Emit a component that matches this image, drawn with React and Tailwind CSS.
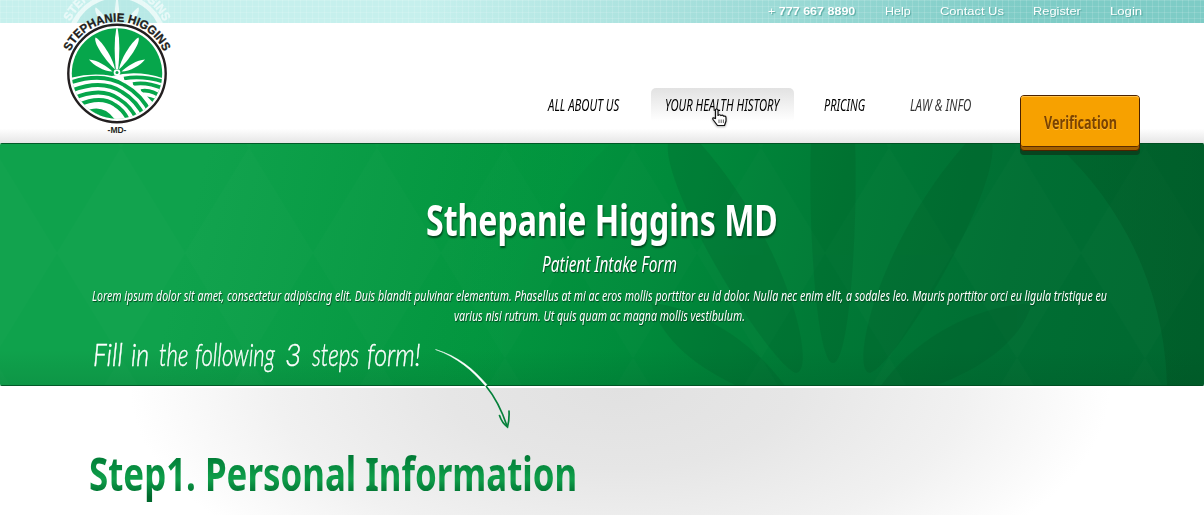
import React, { useLayoutEffect, useRef, useState } from "react";

// A single line of text condensed horizontally to fill the width of its box.
function Fit({ children, className = "", textClassName = "" }) {
  const box = useRef(null);
  const text = useRef(null);
  const [scale, setScale] = useState(1);
  useLayoutEffect(() => {
    setScale(box.current.clientWidth / text.current.offsetWidth);
  }, [children]);
  return (
    <span ref={box} className={`block shrink-0 whitespace-nowrap ${className}`}>
      <span
        ref={text}
        className={`inline-block origin-left ${textClassName}`}
        style={{ transform: `scaleX(${scale})` }}
      >
        {children}
      </span>
    </span>
  );
}

function Logo({ id, ink, paper, field }) {
  return (
    <svg width="120" height="140" viewBox="57 0 120 140" className="block overflow-visible">
      <defs>
        <path id={`${id}-arc`} d="M 70.2 51.4 A 51.7 51.7 0 0 1 163.8 51.4" />
        <clipPath id={`${id}-disc`}>
          <circle cx="117" cy="73.5" r="45.2" />
        </clipPath>
        <clipPath id={`${id}-left`}>
          <path d="M70 79 Q103 71 125 80 Q147 92 158 110 L140 128 H65 Z" />
        </clipPath>
      </defs>
      <circle cx="117" cy="73.5" r="48.7" fill={paper} stroke={ink} strokeWidth="2.4" />
      <g clipPath={`url(#${id}-disc)`}>
        <rect x="70" y="26" width="94" height="96" fill={field} />
        <g fill={paper}>
          <path d="M117 25 Q121 42 118.200 69 L115.800 69 Q113 42 117 25Z" />
          <path d="M95.500 37.500 C100 39 113 57 115 69.500 C106 61 93 43 95.500 37.500Z" />
          <path d="M138.500 37.500 C134 39 121 57 119 69.500 C128 61 141 43 138.500 37.500Z" />
          <path d="M89 59.500 C97 60 107 66 112.500 71.500 C104 71.500 93 65 89 59.500Z" />
          <path d="M145 59.500 C137 60 127 66 121.500 71.500 C130 71.500 141 65 145 59.500Z" />
          <path d="M66 79 Q90 72 112 76 Q140 69 168 80 V126 H66Z" />
        </g>
        <g fill="none" stroke={field} strokeWidth="3.800">
          <path d="M124 78.500 Q144 75 168 83" />
          <path d="M133 84 Q148 81 168 90.500" />
          <path d="M141 91 Q152 89 164 99" />
          <path d="M147 98.500 Q154 99 160 105" />
        </g>
        <g clipPath={`url(#${id}-left)`}>
          <rect x="66" y="70" width="95" height="60" fill={paper} />
          <g fill="none" stroke={field} strokeWidth="3.800">
            <path d="M66 84 Q101 71 124 85 Q142 95 151 114" />
            <path d="M68 92 Q101 78 122 92 Q137 101 145 118" />
            <path d="M72 99 Q101 86 119 99 Q132 107 138 122" />
            <path d="M78 105 Q101 95 115 105 Q125 111 130 124" />
          </g>
          <path d="M84 112 Q103 102 116 121 L104 120Z" fill={field} />
        </g>
      </g>
      <circle cx="117" cy="72.500" r="3.300" fill={paper} />
      <circle cx="117" cy="72.500" r="1.500" fill={field} />
      <text
        fill={ink}
        stroke={ink}
        strokeWidth=".3"
        className="font-['Liberation_Sans',sans-serif] text-[12px] font-bold"
      >
        <textPath href={`#${id}-arc`} textLength="117" lengthAdjust="spacingAndGlyphs">
          STEPHANIE HIGGINS
        </textPath>
      </text>
      <text
        x="117"
        y="133"
        textAnchor="middle"
        fill={ink}
        className="font-['Liberation_Sans',sans-serif] text-[8.5px] font-bold"
      >
        -MD-
      </text>
    </svg>
  );
}

function TopBar() {
  return (
    <div className="relative h-[23px] overflow-hidden bg-linear-to-r from-[#c6f0ed] from-35% via-[#9fdcd8] via-62% to-[#7eccc6] to-85%">
      <div className="absolute inset-0 bg-[linear-gradient(#ffffff20_1px,transparent_1px),linear-gradient(90deg,#ffffff20_1px,transparent_1px)] bg-size-[6px_6px]" />
      <div className="absolute -top-[30px] left-[57px] opacity-60">
        <Logo id="ghost" ink="#ffffff" paper="#ffffff" field="#b0e6e2" />
      </div>
      <div className="relative flex h-[22px] items-center pl-[768px] font-['Liberation_Sans',sans-serif] text-[11.5px] leading-[22px] text-white [text-shadow:1px_1px_1px_#57a9a2]">
        <Fit className="mr-[29px] w-[87px]">
          + <b>777 667 8890</b>
        </Fit>
        <Fit className="mr-[29px] ml-px w-[26px]">Help</Fit>
        <Fit className="mr-[29px] w-[64px]">Contact Us</Fit>
        <Fit className="mr-[29px] w-[48px]">Register</Fit>
        <Fit className="w-[32px]">Login</Fit>
      </div>
    </div>
  );
}

function Hand() {
  return (
    <svg width="18" height="20" viewBox="0 0 18 20" className="absolute top-[20px] left-[60px] drop-shadow-[0_1px_1px_#00000055]">
      <path
        d="M4.500 1.500 Q6 .3 7 2 V7.500 Q8.500 6 10 7.600 Q11.500 6.600 12.600 8.200 Q15 7.500 15 10 V13 L13.500 17.500 H6.500 L2 11.500 Q1 8.700 4.500 10.500Z"
        fill="#fff"
        stroke="#111"
        strokeWidth="1.200"
        strokeLinejoin="round"
      />
      <path d="M8 11.500V15M10.200 11.500V15M12.400 11.500V15" stroke="#333" strokeWidth=".8" />
    </svg>
  );
}

function Nav() {
  return (
    <nav className="flex h-[120px] items-start bg-linear-to-b from-white from-88% to-[#e6e6e6] pt-[65px] pl-[548px] font-['Noto_Sans',sans-serif] text-[15.5px] leading-[34px] text-black italic [font-stretch:75%]">
      <Fit className="w-[71px]">ALL ABOUT US</Fit>
      <div className="relative ml-[32px] h-[33px] w-[143px] rounded-t-[5px] bg-linear-to-b from-[#e2e2e2] to-white px-[14px]">
        <Fit className="w-[114px]">YOUR HEALTH HISTORY</Fit>
        <Hand />
      </div>
      <Fit className="ml-[30px] w-[41px]">PRICING</Fit>
      <Fit className="ml-[45px] w-[61px] text-[#333]">LAW &amp; INFO</Fit>
      <button className="relative z-10 mt-[7px] ml-[49px] flex h-[56px] w-[120px] items-start rounded-[4px] border border-[#4b2200] bg-[#a35f00] not-italic shadow-[0_4px_0_#07441f]">
        <span className="flex h-[51px] w-full justify-center rounded-[3px] border-b border-[#5c2c00] bg-[#f7a100] text-[18.5px] leading-[51px] font-bold text-[#7b4300] shadow-[inset_0_1px_0_#ffc14b] [text-shadow:0_1px_0_#ffbe3d]">
          <Fit className="w-[73px]" textClassName="float-left">Verification</Fit>
        </span>
      </button>
    </nav>
  );
}

function HeroArt() {
  return (
    <svg width="1204" height="243" viewBox="0 143 1204 243" className="absolute inset-0">
      <defs>
        <linearGradient id="hero" gradientUnits="userSpaceOnUse" x1="200" y1="180" x2="1180" y2="420">
          <stop offset="0" stopColor="#0fa24c" />
          <stop offset=".3" stopColor="#03963f" />
          <stop offset=".45" stopColor="#008b3b" />
          <stop offset=".62" stopColor="#007a36" />
          <stop offset=".8" stopColor="#006e33" />
          <stop offset="1" stopColor="#006830" />
        </linearGradient>
        <linearGradient id="foot" x1="0" y1="0" x2="0" y2="1">
          <stop offset="0" stopColor="#00401c" stopOpacity="0" />
          <stop offset="1" stopColor="#00401c" stopOpacity=".13" />
        </linearGradient>
        <linearGradient id="rim" x1="0" y1="0" x2="1" y2="0">
          <stop offset=".35" stopColor="#009a40" stopOpacity="0" />
          <stop offset=".5" stopColor="#009a40" stopOpacity=".3" />
          <stop offset=".65" stopColor="#00551f" stopOpacity="0" />
          <stop offset="1" stopColor="#004d20" stopOpacity=".38" />
        </linearGradient>
        <pattern id="diamonds" width="128" height="210" patternUnits="userSpaceOnUse" x="-7" y="148">
          <path d="M0 0 L64 105 L0 210Z M128 0 L64 105 L128 210Z" fill="#fff" opacity=".012" />
        </pattern>
      </defs>
      <rect y="143" width="1204" height="243" fill="url(#hero)" />
      <rect y="143" width="1204" height="243" fill="url(#diamonds)" />
      <path
        d="M0 143H1204V386H0Z M499 393A334 334 0 0 0 1167 393A334 334 0 0 0 499 393Z"
        fillRule="evenodd"
        fill="url(#rim)"
      />
      <g fill="#004d22" opacity=".17">
        <path d="M811 143 C808 220 816 363 833 363 C850 363 858 220 855 143Z" />
        <path d="M668 143 C662 190 768 363 796 373 C817 372 790 245 700 143Z" />
        <path d="M992 143 C1000 190 898 363 870 373 C849 372 876 245 966 143Z" />
        <path d="M651 303 C665 350 715 378 760 396 H792 C760 345 700 307 651 303Z" />
        <path d="M1032 303 C1018 350 965 378 906 396 H874 C906 345 966 307 1032 303Z" />
      </g>
      <rect y="350" width="1204" height="36" fill="url(#foot)" />
      <path d="M0 143.500H1204M0 385.500H1204" stroke="#004a20" strokeOpacity=".8" />
    </svg>
  );
}

function Hero() {
  return (
    <section className="relative h-[243px] overflow-hidden rounded-[2px] font-['Noto_Sans',sans-serif] text-white [font-stretch:75%]">
      <HeroArt />
      <div className="relative flex flex-col items-center pt-[51px]">
        <h1 className="text-[43.5px] leading-[50px] font-bold [text-shadow:1px_2px_2px_#00481f]">
          <Fit className="w-[352px]">Sthepanie Higgins MD</Fit>
        </h1>
        <h2 className="mt-[4px] ml-[14px] text-[21.5px] leading-[32px] italic [text-shadow:1px_1px_1px_#00481f]">
          <Fit className="w-[135px]">Patient Intake Form</Fit>
        </h2>
        <div className="mt-[5px] -ml-[5px] flex flex-col items-center text-[15px] leading-[20px] italic [text-shadow:1px_1px_1px_#00481f]">
          <Fit className="w-[1015px]">
            Lorem ipsum dolor sit amet, consectetur adipiscing elit. Duis blandit pulvinar elementum. Phasellus at mi ac eros mollis porttitor eu id dolor. Nulla nec enim elit, a sodales leo. Mauris porttitor orci eu ligula tristique eu
          </Fit>
          <Fit className="w-[291px]">varius nisi rutrum. Ut quis quam ac magna mollis vestibulum.</Fit>
        </div>
      </div>
      <p className="relative mt-[11px] flex pl-[93px] font-['Lato',sans-serif] text-[32px] leading-[36px] font-light italic [-webkit-text-stroke:0.4px_white]">
        <Fit className="w-[30px]">Fill</Fit>
        <Fit className="ml-[8px] w-[18px]">in</Fit>
        <Fit className="ml-[10px] w-[29px]">the</Fit>
        <Fit className="ml-[7px] w-[80px]">following</Fit>
        <Fit className="ml-[10px] w-[17px]">3</Fit>
        <Fit className="ml-[10px] w-[47px]">steps</Fit>
        <Fit className="ml-[8px] w-[54px]">form!</Fit>
      </p>
    </section>
  );
}

function Arrow() {
  return (
    <svg width="90" height="85" viewBox="430 345 90 85" className="absolute -top-[43px] left-[430px]">
      <path d="M435.500 349.500 C457 357 473 371 485.500 386 L487 384.800 C474 369.500 458 356 435.500 349.500Z" fill="#fff" stroke="#fff" strokeWidth=".5" />
      <path d="M486 386 C495 397 502 411 507 426" fill="none" stroke="#05803a" strokeWidth="1.700" />
      <path d="M499.500 415.500 Q502 423 507.500 427 Q509.500 419 509 411" fill="none" stroke="#05803a" strokeWidth="1.700" strokeLinecap="round" />
    </svg>
  );
}

export default function App() {
  return (
    <main className="relative h-[515px] w-[1204px] overflow-hidden bg-white">
      <header>
        <TopBar />
        <Nav />
      </header>
      <div className="absolute top-0 left-[57px]">
        <Logo id="logo" ink="#231f20" paper="#ffffff" field="#06a64b" />
      </div>
      <Hero />
      <section className="relative mt-[2px] h-[127px] bg-[radial-gradient(ellipse_490px_230px_at_620px_0px,#e1e1e1_0%,#e6e6e6_35%,#f1f1f1_70%,#ffffff_100%)] pt-[55px] pl-[89px]">
        <Arrow />
        <h2 className="font-['Noto_Sans',sans-serif] text-[46.5px] leading-[60px] font-bold [font-stretch:75%]">
          <Fit
            className="w-[488px]"
            textClassName="bg-linear-to-b from-[#007a35] from-20% via-[#10a04b] via-60% to-[#00682c] to-90% bg-clip-text text-transparent"
          >
            Step1. Personal Information
          </Fit>
        </h2>
      </section>
    </main>
  );
}
